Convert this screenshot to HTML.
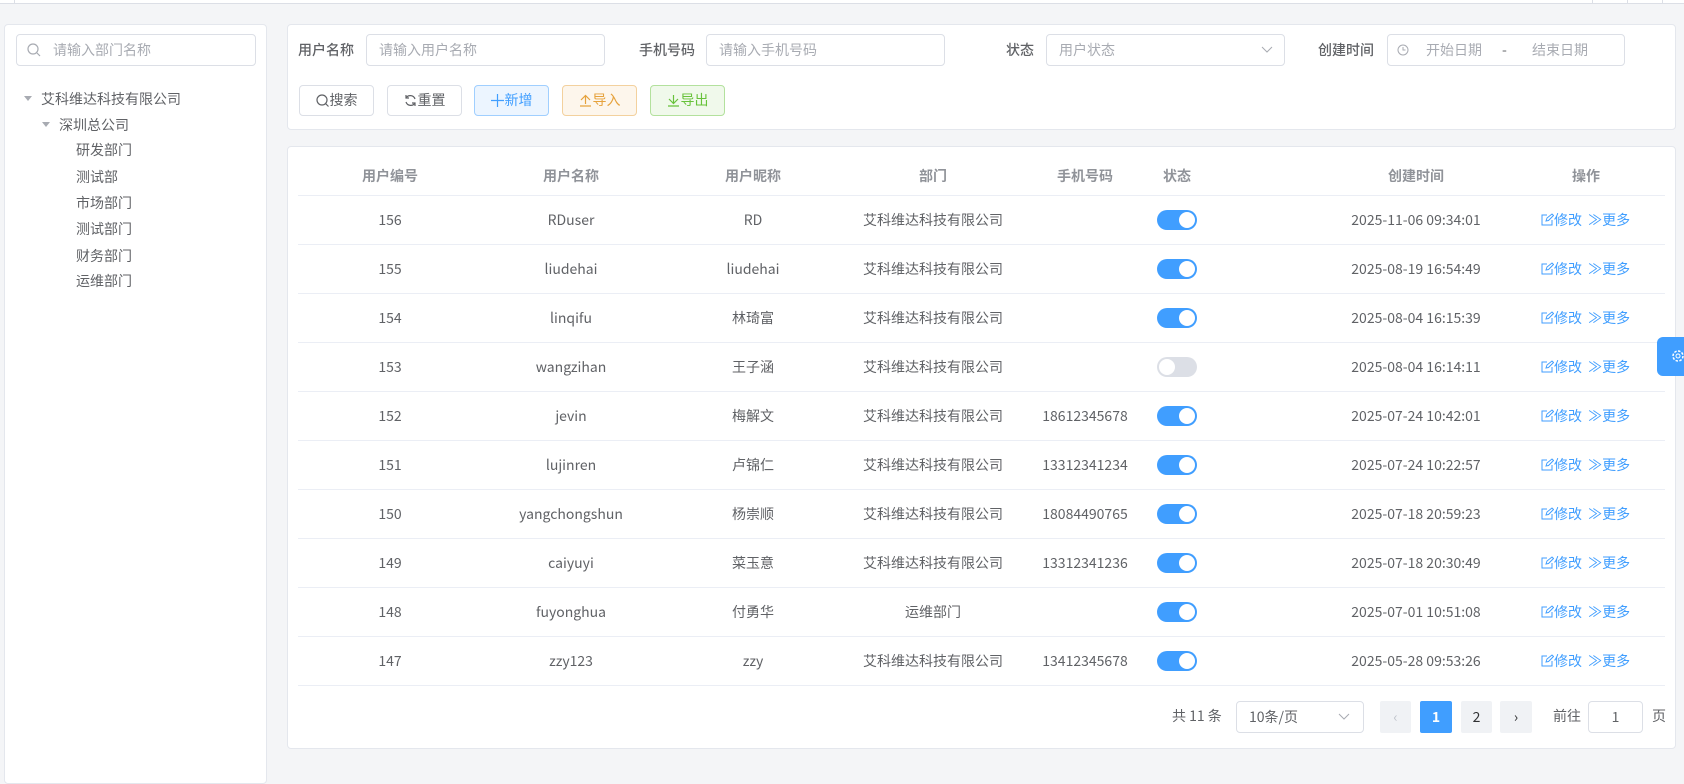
<!DOCTYPE html>
<html><head><meta charset="utf-8"><style>
*{box-sizing:border-box;margin:0;padding:0}
body{width:1684px;height:760px;background:#f4f5f7;font-family:"Noto Sans CJK SC","Liberation Sans",sans-serif;font-size:14px;color:#606266;position:relative;overflow:hidden}
.a{position:absolute}
.panel{position:absolute;background:#fff;border:1px solid #e4e7ed;border-radius:4px}
.inp{position:absolute;border:1px solid #dcdfe6;border-radius:4px;background:#fff;color:#a8abb2;font-size:14px;line-height:30px;padding-left:12px}
.lbl{position:absolute;color:#606266;font-size:14px;font-weight:500;line-height:32px}
.btn{position:absolute;top:85px;height:31px;border:1px solid #dcdfe6;border-radius:4px;font-size:14px;line-height:29px;text-align:center;color:#606266}
.btn svg{vertical-align:-2px;margin-right:1px}
.tree{position:absolute;font-size:14px;color:#606266;line-height:20px}
.th{position:absolute;top:166px;font-weight:bold;color:#909399;font-size:14px;transform:translateX(-50%);white-space:nowrap}
.hl{position:absolute;left:298px;width:1367px;height:1px;background:#ebeef5}
.td{position:absolute;transform:translateX(-50%);white-space:nowrap;color:#606266;font-size:14px;line-height:20px}
.sw{position:absolute;width:40px;height:20px;border-radius:10px;background:#409eff}
.sw i{position:absolute;top:2px;right:2px;width:16px;height:16px;border-radius:50%;background:#fff}
.sw.off{background:#dcdfe6}.sw.off i{right:auto;left:2px}
.act{position:absolute;color:#409eff;font-size:14px;line-height:20px;white-space:nowrap}
.pg{position:absolute;top:701px;height:32px;border-radius:2px;background:#f0f2f5;text-align:center;line-height:32px;font-size:14px;color:#303133}
</style></head><body>
<div class="a" style="left:0;top:0;width:1684px;height:4px;background:#fff;border-bottom:1px solid #dcdfe6"></div>
<div class="a" style="left:14px;top:0;width:1px;height:4px;background:#dcdfe6"></div>
<div class="a" style="left:1592px;top:0;width:1px;height:4px;background:#dcdfe6"></div>
<div class="a" style="left:1627px;top:0;width:1px;height:4px;background:#dcdfe6"></div>
<div class="a" style="left:1662px;top:0;width:1px;height:4px;background:#dcdfe6"></div>

<div class="panel" style="left:4px;top:24px;width:263px;height:760px"></div>
<div class="inp" style="left:16px;top:34px;width:240px;height:32px;padding-left:36px">请输入部门名称</div>
<svg class="a" style="left:27px;top:43px" width="14" height="14" viewBox="0 0 14 14"><circle cx="6" cy="6" r="5" fill="none" stroke="#a8abb2" stroke-width="1.2"/><path d="M10 10l3 3" stroke="#a8abb2" stroke-width="1.2"/></svg>
<div class="a" style="left:24px;top:96px;width:0;height:0;border-left:4px solid transparent;border-right:4px solid transparent;border-top:5px solid #a8abb2"></div>
<div class="tree" style="left:41px;top:89px">艾科维达科技有限公司</div>
<div class="a" style="left:42px;top:122px;width:0;height:0;border-left:4px solid transparent;border-right:4px solid transparent;border-top:5px solid #a8abb2"></div>
<div class="tree" style="left:59px;top:115px">深圳总公司</div>
<div class="tree" style="left:76px;top:140px">研发部门</div>
<div class="tree" style="left:76px;top:167px">测试部</div>
<div class="tree" style="left:76px;top:193px">市场部门</div>
<div class="tree" style="left:76px;top:219px">测试部门</div>
<div class="tree" style="left:76px;top:246px">财务部门</div>
<div class="tree" style="left:76px;top:271px">运维部门</div>

<div class="panel" style="left:287px;top:24px;width:1389px;height:106px"></div>
<div class="lbl" style="left:298px;top:34px">用户名称</div>
<div class="inp" style="left:366px;top:34px;width:239px;height:32px">请输入用户名称</div>
<div class="lbl" style="left:639px;top:34px">手机号码</div>
<div class="inp" style="left:706px;top:34px;width:239px;height:32px">请输入手机号码</div>
<div class="lbl" style="left:1006px;top:34px">状态</div>
<div class="inp" style="left:1046px;top:34px;width:239px;height:32px">用户状态</div>
<svg class="a" style="left:1261px;top:46px" width="12" height="8"><path d="M1 1l5 5 5-5" fill="none" stroke="#a8abb2"/></svg>
<div class="lbl" style="left:1318px;top:34px">创建时间</div>
<div class="inp" style="left:1387px;top:34px;width:238px;height:32px"></div>
<svg class="a" style="left:1397px;top:44px" width="12" height="12"><circle cx="6" cy="6" r="5" fill="none" stroke="#a8abb2"/><path d="M6 3v3h2.5" fill="none" stroke="#a8abb2"/></svg>
<div class="a" style="left:1426px;top:40px;color:#a8abb2">开始日期</div>
<div class="a" style="left:1502px;top:40px;color:#606266">-</div>
<div class="a" style="left:1532px;top:40px;color:#a8abb2">结束日期</div>

<div class="btn" style="left:299px;width:75px"><svg width="13" height="13"><circle cx="6" cy="6" r="5" fill="none" stroke="#606266" stroke-width="1.2"/><path d="M9.5 9.5l3 3" stroke="#606266" stroke-width="1.2"/></svg>搜索</div>
<div class="btn" style="left:387px;width:75px"><svg width="13" height="13"><path d="M11 5A5 5 0 0 0 2 4M2 8a5 5 0 0 0 9 1" fill="none" stroke="#606266" stroke-width="1.2"/><path d="M2 1v3h3M11 12V9H8" fill="none" stroke="#606266" stroke-width="1.2"/></svg>重置</div>
<div class="btn" style="left:474px;width:75px;background:#ecf5ff;border-color:#a0cfff;color:#409eff"><svg width="13" height="13"><path d="M6.5 0v13M0 6.5h13" stroke="#409eff" stroke-width="1.2"/></svg>新增</div>
<div class="btn" style="left:562px;width:75px;background:#fdf6ec;border-color:#f3d19e;color:#e6a23c"><svg width="13" height="13"><path d="M2 6l4.5-4.5L11 6M6.5 2v8M1 12h11" fill="none" stroke="#e6a23c" stroke-width="1.2"/></svg>导入</div>
<div class="btn" style="left:650px;width:75px;background:#f0f9eb;border-color:#b3e19d;color:#67c23a"><svg width="13" height="13"><path d="M2 5l4.5 4.5L11 5M6.5 1v8M1 12h11" fill="none" stroke="#67c23a" stroke-width="1.2"/></svg>导出</div>

<div class="panel" style="left:287px;top:146px;width:1389px;height:603px"></div>
<div class="th" style="left:390px">用户编号</div>
<div class="th" style="left:571px">用户名称</div>
<div class="th" style="left:753px">用户昵称</div>
<div class="th" style="left:933px">部门</div>
<div class="th" style="left:1085px">手机号码</div>
<div class="th" style="left:1177px">状态</div>
<div class="th" style="left:1416px">创建时间</div>
<div class="th" style="left:1586px">操作</div>
<div class="hl" style="top:195px"></div>

<div id="rows"></div>
<script>
var d=[["156","RDuser","RD","艾科维达科技有限公司","",1,"2025-11-06 09:34:01"],
["155","liudehai","liudehai","艾科维达科技有限公司","",1,"2025-08-19 16:54:49"],
["154","linqifu","林琦富","艾科维达科技有限公司","",1,"2025-08-04 16:15:39"],
["153","wangzihan","王子涵","艾科维达科技有限公司","",0,"2025-08-04 16:14:11"],
["152","jevin","梅解文","艾科维达科技有限公司","18612345678",1,"2025-07-24 10:42:01"],
["151","lujinren","卢锦仁","艾科维达科技有限公司","13312341234",1,"2025-07-24 10:22:57"],
["150","yangchongshun","杨崇顺","艾科维达科技有限公司","18084490765",1,"2025-07-18 20:59:23"],
["149","caiyuyi","菜玉意","艾科维达科技有限公司","13312341236",1,"2025-07-18 20:30:49"],
["148","fuyonghua","付勇华","运维部门","",1,"2025-07-01 10:51:08"],
["147","zzy123","zzy","艾科维达科技有限公司","13412345678",1,"2025-05-28 09:53:26"]];
var cx=[390,571,753,933,1085],h="";
d.forEach(function(r,i){var y=210+i*49;
for(var j=0;j<5;j++)h+='<div class="td" style="left:'+cx[j]+'px;top:'+y+'px">'+r[j]+'</div>';
h+='<div class="sw'+(r[5]?'':' off')+'" style="left:1157px;top:'+y+'px"><i></i></div>';
h+='<div class="td" style="left:1416px;top:'+y+'px">'+r[6]+'</div>';
h+='<div class="act" style="left:1541px;top:'+y+'px"><svg width="13" height="13" style="vertical-align:-1px"><path d="M11 7v5H1V2h5" fill="none" stroke="#409eff"/><path d="M5 8l1-3 5-4 1.5 1.5-5 5z" fill="none" stroke="#409eff"/></svg>修改 <span style="margin-left:3px">≫更多</span></div>';
h+='<div class="hl" style="top:'+(y+34)+'px"></div>';});
document.getElementById('rows').innerHTML=h;
</script>

<div class="a" style="left:1172px;top:706px">共 11 条</div>
<div class="inp" style="left:1236px;top:701px;width:128px;height:32px;color:#606266">10条/页</div>
<svg class="a" style="left:1338px;top:713px" width="12" height="8"><path d="M1 1l5 5 5-5" fill="none" stroke="#a8abb2"/></svg>
<div class="pg" style="left:1380px;width:31px;color:#c0c4cc">‹</div>
<div class="pg" style="left:1420px;width:32px;background:#409eff;color:#fff;font-weight:bold">1</div>
<div class="pg" style="left:1461px;width:31px">2</div>
<div class="pg" style="left:1500px;width:32px">›</div>
<div class="a" style="left:1553px;top:706px">前往</div>
<div class="inp" style="left:1588px;top:701px;width:55px;height:32px;color:#606266;text-align:center;padding:0">1</div>
<div class="a" style="left:1652px;top:706px">页</div>

<div class="a" style="left:1657px;top:337px;width:30px;height:39px;background:#409eff;border-radius:6px 0 0 6px"></div>
<svg class="a" style="left:1670px;top:348px" width="16" height="16"><circle cx="8" cy="8" r="5" fill="none" stroke="#fff" stroke-width="1.5" stroke-dasharray="2.5 1.4"/><circle cx="8" cy="8" r="2" fill="none" stroke="#fff"/></svg>
</body></html>
